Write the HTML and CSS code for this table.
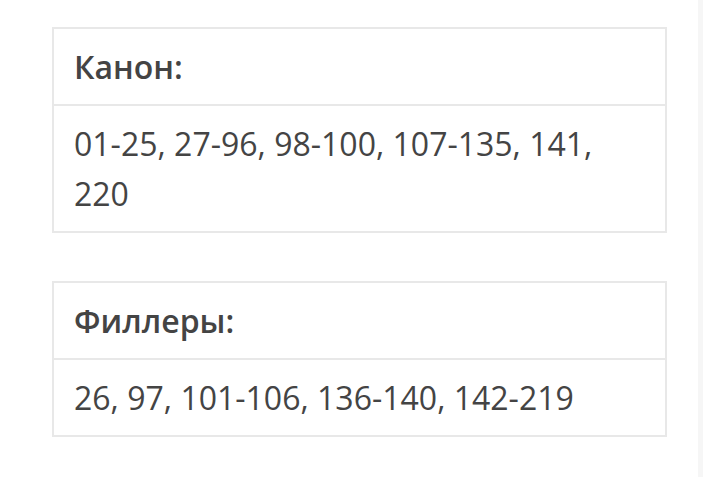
FILE: index.html
```html
<!DOCTYPE html>
<html lang="ru">
<head>
<meta charset="utf-8">
<link rel="stylesheet" href="styles.css">
</head>
<body>
<div class="page">
  <main class="content">
    <section class="card">
      <div class="card-head">Канон:</div>
      <div class="card-body">01-25, 27-96, 98-100, 107-135, 141, 220</div>
    </section>
    <section class="card">
      <div class="card-head">Филлеры:</div>
      <div class="card-body">26, 97, 101-106, 136-140, 142-219</div>
    </section>
  </main>
  <div class="stripe"></div>
</div>
</body>
</html>
```

FILE: styles.css
```css
html, body {
  margin: 0;
  padding: 0;
  background: #fff;
}
.page {
  display: flex;
  height: 477px;
  overflow: hidden;
}
.content {
  width: 615px;
  padding: 27px 0 0 52px;
  display: flex;
  flex-direction: column;
  gap: 48px;
  font-family: "Open Sans", "Noto Sans", sans-serif;
  color: #444;
}
.card {
  border: 2px solid #e8e8e8;
}
.card-head {
  font-weight: 600;
  font-size: 32px;
  line-height: 50px;
  padding: 13px 20px 12px 20px;
  border-bottom: 2px solid #e8e8e8;
}
.card-body {
  font-size: 32px;
  line-height: 50px;
  padding: 13px 60px 12px 20px;
}
.stripe {
  margin-left: 31px;
  width: 5px;
  background: #f6f6f6;
}
```
